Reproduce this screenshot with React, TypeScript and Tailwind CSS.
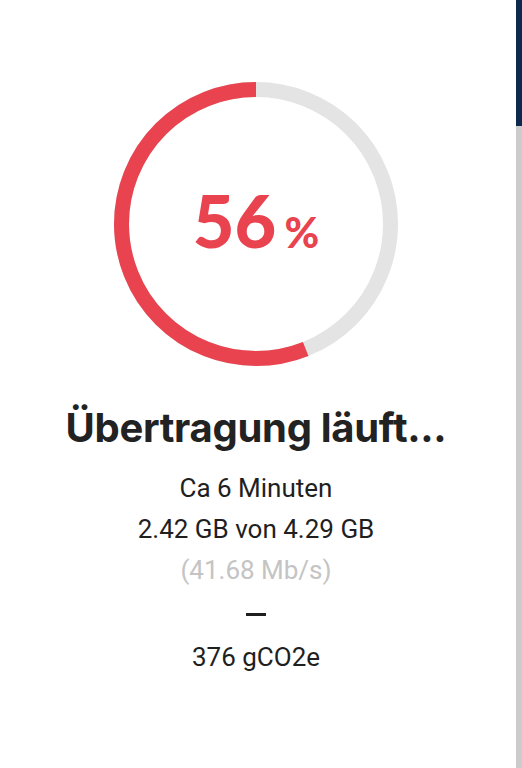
import React from 'react'

const RADIUS = 134.5
const CIRC = 2 * Math.PI * RADIUS

function ProgressRing({ percent }: { percent: number }) {
  const filled = (percent / 100) * CIRC
  return (
    <div className="relative w-[284px] h-[284px]">
      <svg width="284" height="284" viewBox="0 0 284 284" className="block">
        <circle cx="142" cy="142" r={RADIUS} fill="none" stroke="#e4e4e4" strokeWidth="15" />
        {/* fill runs counter-clockwise from 12 o'clock */}
        <circle
          cx="142"
          cy="142"
          r={RADIUS}
          fill="none"
          stroke="#e8434e"
          strokeWidth="15"
          strokeDasharray={`${filled} ${CIRC}`}
          transform="translate(284 0) scale(-1 1) rotate(-90 142 142)"
        />
      </svg>
      <div className="absolute inset-0 flex items-center justify-center pb-[8px]">
        <div className="flex items-baseline text-[#e8434e] font-['Lato',sans-serif] font-black">
          <span className="text-[72px] leading-none">{percent}</span>
          <span className="text-[42px] leading-none ml-[8px]">%</span>
        </div>
      </div>
    </div>
  )
}

export default function App() {
  return (
    <div className="flex w-[522px] h-[768px] bg-white overflow-hidden">
      <div className="flex-1 flex flex-col items-center pt-[82px] pr-[4px]">
        <ProgressRing percent={56} />

        <h1 className="mt-[38px] text-[40px] leading-[48px] font-bold text-[#222] font-['Inter',sans-serif] tracking-[-0.3px]">
          Übertragung läuft...
        </h1>

        <div className="mt-[16px] flex flex-col items-center font-['Roboto',sans-serif] text-[26px] text-[#1f1f1f]">
          <p className="leading-[41px]">Ca 6 Minuten</p>
          <p className="leading-[41px]">2.42 GB von 4.29 GB</p>
          <p className="leading-[41px] text-[#c4c4c4]">(41.68 Mb/s)</p>
          <div className="mt-[22px] w-[20px] h-[3px] bg-[#1f1f1f]" />
          <p className="mt-[21px] leading-[41px]">376 gCO2e</p>
        </div>
      </div>

      {/* side scroll strip */}
      <div className="w-[6px] flex flex-col">
        <div className="h-[126px] bg-[#0d2a4e]" />
        <div className="flex-1 bg-[#cccccc]" />
      </div>
    </div>
  )
}
